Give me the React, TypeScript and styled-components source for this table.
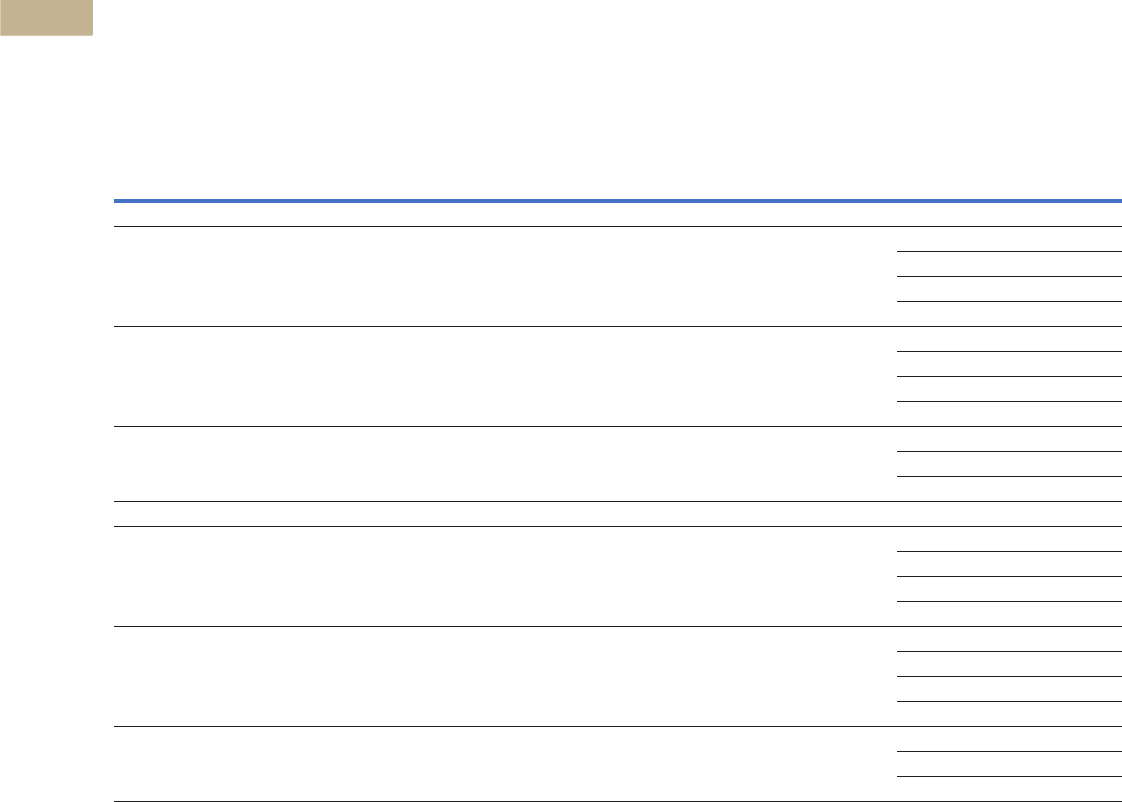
import React from "react";
import styled, { createGlobalStyle } from "styled-components";

const GlobalStyle = createGlobalStyle`
  body {
    margin: 0;
    font-family: "Liberation Sans", Arial, sans-serif;
    background: #ffffff;
  }
`;

// sub-row counts for each group under the header
const groups = [4, 4, 3, 1, 4, 4, 3];

const App = () => {
  return (
    <>
      <GlobalStyle />
      <Page>
        <Tab />
        <Table>
          <Header>
            <LeftCell />
            <RightCol />
          </Header>
          {groups.map((count, i) => (
            <Group key={i}>
              <LeftCell />
              <RightCol>
                {Array.from({ length: count }).map((_, j) => (
                  <SubRow key={j} first={j === 0} />
                ))}
              </RightCol>
            </Group>
          ))}
        </Table>
      </Page>
    </>
  );
};

const Page = styled.div`
  width: 1122px;
  height: 802px;
  overflow: hidden;
`;
const Tab = styled.div`
  width: 93px;
  height: 36px;
  background-color: #c3b393;
  border-left: 1px solid #d6cab2;
  border-bottom: 1px solid #d2c6ac;
  box-sizing: border-box;
  border-bottom-right-radius: 2px;
`;
const Table = styled.div`
  margin: 163px 0 0 114px;
  width: 1008px;
  border-top: 4px solid #4472c4;
  border-bottom: 1px solid #1e1e1e;
`;
const Header = styled.div`
  display: flex;
  height: 23px;
`;
const Group = styled.div`
  display: flex;
  border-top: 1px solid #1e1e1e;
`;
const LeftCell = styled.div`
  width: 783px;
  flex-shrink: 0;
`;
const RightCol = styled.div`
  flex: 1;
  display: flex;
  flex-direction: column;
`;
const SubRow = styled.div<{ first: boolean }>`
  height: 24px;
  border-top: ${(p) => (p.first ? "none" : "1px solid #1e1e1e")};
`;

export default App;
